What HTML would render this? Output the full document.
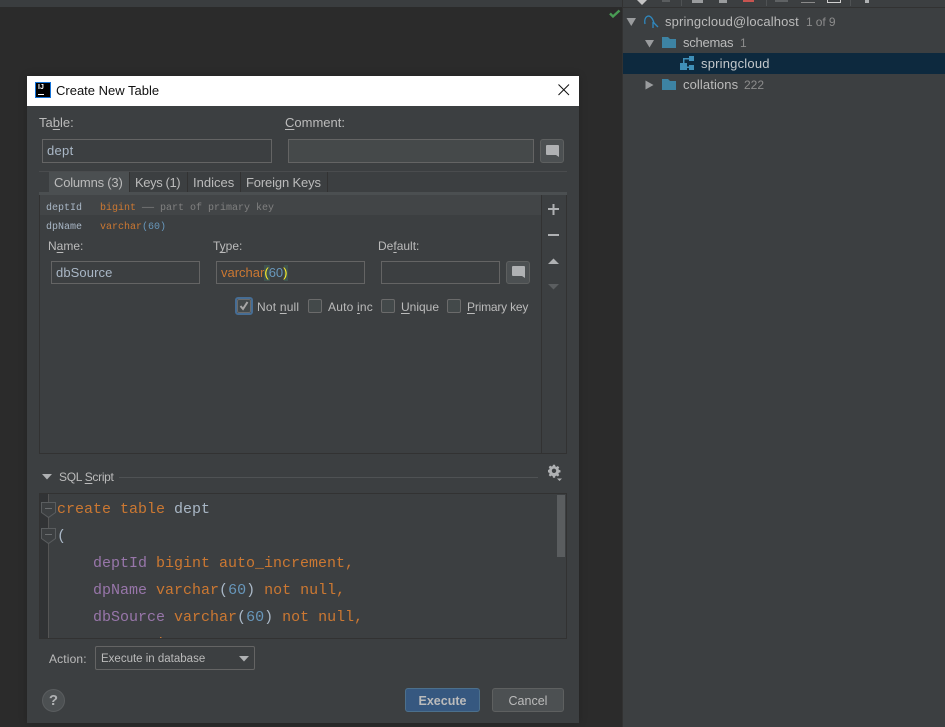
<!DOCTYPE html>
<html><head><meta charset="utf-8"><style>
html,body{margin:0;padding:0;width:945px;height:727px;overflow:hidden;background:#2b2b2b}
*{box-sizing:border-box}
.a,.t,.m{position:absolute;white-space:pre}
.t{font:13px/16px "Liberation Sans",sans-serif;color:#bbbbbb}
.m{font:15px/27px "Liberation Mono",monospace}
.s{font:10px/14px "Liberation Mono",monospace;position:absolute;white-space:pre}
.o{color:#cc7832}.b{color:#6897bb}.p{color:#9876aa}.w{color:#a9b7c6}.g{color:#808080}
.f{position:absolute;border:1px solid #646464;height:24px}
u{text-underline-offset:2px}
.cb{position:absolute;width:14px;height:14px;border:1px solid #6b6b6b;border-radius:2px;background:#43494a}
</style></head><body>
<div class="a" style="left:0;top:0;width:945px;height:7px;background:#3a3d3f"></div>
<div class="a" style="left:0;top:7px;width:623px;height:720px;background:#2b2b2b"></div>
<div class="a" style="left:623px;top:0;width:322px;height:727px;background:#3c3f41"></div>
<div class="a" style="left:623px;top:7px;width:322px;height:1px;background:#323232"></div>
<div class="a" style="left:622px;top:0;width:1px;height:727px;background:#323232"></div>
<svg class="a" style="left:620px;top:0" width="325" height="8"><g fill="#afb1b3"><path d="M17 0h10l-5 5z" fill="#c4c4c4"/><rect x="42" y="0" width="8" height="2" fill="#5a5d5f"/><rect x="61" y="0" width="1" height="6" fill="#4f5254"/><rect x="72" y="0" width="11" height="3" fill="#9a9c9e"/><rect x="99" y="0" width="8" height="3" fill="#9a9c9e"/><rect x="123" y="0" width="11" height="2" fill="#c75450"/><rect x="146" y="0" width="1" height="6" fill="#4f5254"/><rect x="155" y="0" width="13" height="2" fill="#5f6264"/><rect x="181" y="2" width="14" height="1" fill="#8a8a8a"/><path d="M207.500 0v2.500h13V0" fill="none" stroke="#d0d0d0"/><rect x="230" y="0" width="1" height="6" fill="#4f5254"/><rect x="245" y="0" width="4" height="3"/></g></svg>
<svg class="a" style="left:609px;top:9px" width="14" height="10"><path d="M1 4.500L4 7.500L10.500 1.500" fill="none" stroke="#499c54" stroke-width="2.400"/></svg>

<div class="a" style="left:623px;top:53px;width:322px;height:21px;background:#0d293e"></div>
<svg class="a" style="left:620px;top:0" width="80" height="100">
<g fill="#9a9c9e"><path d="M6.500 18h9.500l-4.750 8z"/><path d="M25 40h9l-4.500 7.500z"/><path d="M25.500 80.500l8 4.500l-8 4.500z"/></g>
<g fill="#3d83a3"><path d="M42 37h6l2 2h6v9H42z"/><path d="M42 79h6l2 2h6v9H42z"/></g>
<path d="M25 24C24 19 26 16 29 16C32 17 33 20 34 23L38 27M33 22V28" fill="none" stroke="#2f88bf" stroke-width="1.300"/>
<g fill="#3f8fb8"><rect x="60" y="63" width="7" height="7"/><rect x="69" y="56" width="5" height="5"/><rect x="69" y="65" width="5" height="5"/><path d="M63 63V58h6v1.500h-4.500V63zM67 66.500h2V68h-2z"/></g>
</svg>
<div class="t" style="left:665px;top:14px;letter-spacing:.14px">springcloud@localhost</div>
<div class="t" style="left:806px;top:14px;color:#8c8c8c;font-size:12px;letter-spacing:-.1px">1 of 9</div>
<div class="t" style="left:683px;top:35px;letter-spacing:-.25px">schemas</div>
<div class="t" style="left:740px;top:35px;color:#8c8c8c;font-size:12px">1</div>
<div class="t" style="left:701px;top:56px;letter-spacing:.2px;color:#c4c8cb">springcloud</div>
<div class="t" style="left:683px;top:77px;letter-spacing:.1px">collations</div>
<div class="t" style="left:744px;top:77px;color:#8c8c8c;font-size:12px">222</div>

<div class="a" style="left:27px;top:76px;width:552px;height:647px;background:#3c3f41;box-shadow:0 0 8px rgba(0,0,0,.18)"></div>
<div class="a" style="left:27px;top:76px;width:552px;height:30px;background:#fff"></div>
<svg class="a" style="left:35px;top:82px" width="17" height="17"><rect x=".5" y=".5" width="15" height="15" fill="#000" stroke="#1573d8"/><rect x="3" y="12" width="6" height="1" fill="#fff"/></svg>
<div class="a" style="left:38px;top:84px;font:bold 7px/8px 'Liberation Sans',sans-serif;color:#fff">IJ</div>
<div class="t" style="left:56px;top:83px;color:#111">Create New Table</div>
<svg class="a" style="left:558px;top:84px" width="12" height="12"><path d="M.5.500L11 11M11 .5L.5 11" stroke="#111" stroke-width="1"/></svg>

<div class="t" style="left:39px;top:115px">Ta<u>b</u>le:</div>
<div class="t" style="left:285px;top:115px"><u>C</u>omment:</div>
<div class="f" style="left:42px;top:139px;width:230px"></div>
<div class="t" style="left:47px;top:143px;color:#a9b7c6;letter-spacing:.3px">dept</div>
<div class="f" style="left:288px;top:139px;width:246px;background:#45494a"></div>
<div class="a" style="left:540px;top:139px;width:24px;height:24px;background:#4c5052;border:1px solid #5e6060;border-radius:3px"></div>
<svg class="a" style="left:545px;top:144px" width="15" height="14"><path d="M2 1h11a1 1 0 0 1 1 1v11l-3-2H2a1 1 0 0 1-1-1V2a1 1 0 0 1 1-1z" fill="#afb1b3"/></svg>

<div class="a" style="left:39px;top:171px;width:528px;height:1px;background:#4a4c4e"></div>
<div class="a" style="left:49px;top:172px;width:80px;height:20px;background:#4b4f51"></div>
<div class="a" style="left:129px;top:172px;width:1px;height:20px;background:#323232"></div>
<div class="a" style="left:187px;top:172px;width:1px;height:20px;background:#323232"></div>
<div class="a" style="left:240px;top:172px;width:1px;height:20px;background:#323232"></div>
<div class="a" style="left:327px;top:172px;width:1px;height:20px;background:#323232"></div>
<div class="t" style="left:54px;top:175px;letter-spacing:-.2px">Columns (3)</div>
<div class="t" style="left:135px;top:175px;letter-spacing:-.4px">Keys (1)</div>
<div class="t" style="left:193px;top:175px">Indices</div>
<div class="t" style="left:246px;top:175px;letter-spacing:-.15px">Foreign Keys</div>
<div class="a" style="left:39px;top:192px;width:528px;height:3px;background:#4b4f51"></div>

<div class="a" style="left:39px;top:195px;width:528px;height:259px;border:1px solid #323232;border-top:0"></div>
<div class="a" style="left:40px;top:195px;width:501px;height:20px;background:#424547"></div>
<div class="a" style="left:541px;top:195px;width:1px;height:259px;background:#323232"></div>
<div class="s" style="left:46px;top:202px;color:#a9b7c6">deptId</div>
<div class="s" style="left:100px;top:202px"><span class="o">bigint</span> <span class="g"><span style="display:inline-block;width:12px;transform:scaleX(2);transform-origin:left">—</span> part of primary key</span></div>
<div class="s" style="left:46px;top:221px;color:#a9b7c6">dpName</div>
<div class="s" style="left:100px;top:221px"><span class="o">varchar</span><span class="b">(60)</span></div>

<svg class="a" style="left:547px;top:202px" width="14" height="92" fill="#afb1b3"><path d="M1 6h11v2H1zM5.500 2h2v11h-2z"/><path d="M1 32h11v2H1z"/><path d="M1 62l5.500-5.500l5.500 5.500z"/><path d="M1 82h11l-5.500 5.500z" fill="#5b5e60"/></svg>

<div class="t" style="left:48px;top:238px;font-size:12px">N<u>a</u>me:</div>
<div class="t" style="left:213px;top:238px;font-size:12px">T<u>y</u>pe:</div>
<div class="t" style="left:378px;top:238px;font-size:12px">De<u>f</u>ault:</div>
<div class="f" style="left:51px;top:261px;width:149px;height:23px"></div>
<div class="t" style="left:56px;top:265px;color:#a9b7c6;letter-spacing:.1px">dbSource</div>
<div class="f" style="left:216px;top:261px;width:149px;height:23px"></div>
<div class="a" style="left:264px;top:265px;width:6px;height:16px;background:#3f5350"></div>
<div class="a" style="left:284px;top:265px;width:4px;height:16px;background:#3f5350"></div>
<div class="t" style="left:221px;top:265px"><span class="o">varchar</span><span style="color:#ffef28">(</span><span class="b">60</span><span style="color:#ffef28">)</span></div>
<div class="f" style="left:381px;top:261px;width:119px;height:23px"></div>
<div class="a" style="left:506px;top:261px;width:24px;height:23px;background:#4c5052;border:1px solid #5e6060;border-radius:3px"></div>
<svg class="a" style="left:511px;top:265px" width="15" height="14"><path d="M2 1h11a1 1 0 0 1 1 1v11l-3-2H2a1 1 0 0 1-1-1V2a1 1 0 0 1 1-1z" fill="#afb1b3"/></svg>

<div class="a" style="left:235px;top:297px;width:18px;height:18px;border:2px solid #466d94;border-radius:3px"></div>
<div class="cb" style="left:237px;top:299px"></div>
<svg class="a" style="left:238px;top:300px" width="12" height="12"><path d="M2.500 6L5 9L9.500 2" fill="none" stroke="#a7a7a7" stroke-width="2"/></svg>
<div class="t" style="left:257px;top:299px;font-size:12px;letter-spacing:.2px">Not <u>n</u>ull</div>
<div class="cb" style="left:308px;top:299px"></div>
<div class="t" style="left:328px;top:299px;font-size:12px;letter-spacing:.2px">Auto <u>i</u>nc</div>
<div class="cb" style="left:381px;top:299px"></div>
<div class="t" style="left:401px;top:299px;font-size:12px"><u>U</u>nique</div>
<div class="cb" style="left:447px;top:299px"></div>
<div class="t" style="left:467px;top:299px;font-size:12px;letter-spacing:-.2px"><u>P</u>rimary key</div>

<svg class="a" style="left:42px;top:474px" width="10" height="6"><path d="M0 0h10l-5 5.500z" fill="#afb1b3"/></svg>
<div class="t" style="left:59px;top:469px;font-size:12px;letter-spacing:-.3px">SQL <u>S</u>cript</div>
<div class="a" style="left:119px;top:477px;width:419px;height:1px;background:#4f5254"></div>
<svg class="a" style="left:548px;top:464px" width="16" height="18" fill="#afb1b3"><path d="M6.200 1h2.600l.4 2 1.400.6 1.700-1.100 1.800 1.800-1.100 1.700.6 1.400 2 .4v2.600l-2 .4-.6 1.400 1.100 1.700-1.800 1.800-1.700-1.100-1.400.6-.4 2H6.200l-.4-2-1.400-.6-1.700 1.100-1.800-1.800 1.100-1.700-.6-1.400-2-.4V7.400l2-.4.600-1.400-1.100-1.700 1.800-1.800 1.700 1.100 1.400-.6z" transform="scale(.8)"/><circle cx="6" cy="6.800" r="2.200" fill="#3c3f41"/><path d="M9 14.500h5l-2.500 2.500z"/></svg>

<div class="a" style="left:39px;top:493px;width:528px;height:146px;border:1px solid #323232"></div>
<div class="a" style="left:40px;top:494px;width:8px;height:144px;background:#313335"></div>
<div class="a" style="left:48px;top:494px;width:1px;height:144px;background:#555"></div>
<svg class="a" style="left:41px;top:502px" width="16" height="44"><g fill="#3c3f41" stroke="#5a5d5f"><path d="M.5.500h14v10l-7 5l-7-5z"/><path d="M.5 26.500h14v10l-7 5l-7-5z"/></g><path d="M4 6.500h7M4 32.500h7" stroke="#6a6d6f"/></svg>
<div class="a" style="left:57px;top:494px;width:500px;height:144px;overflow:hidden">
<div class="m" style="left:0;top:2px"><span class="o">create table </span><span class="w">dept</span></div>
<div class="m" style="left:0;top:29px;color:#a9b7c6">(</div>
<div class="m" style="left:36px;top:56px"><span class="p">deptId</span> <span class="o">bigint auto_increment,</span></div>
<div class="m" style="left:36px;top:83px"><span class="p">dpName</span> <span class="o">varchar</span><span class="w">(</span><span class="b">60</span><span class="w">)</span> <span class="o">not null,</span></div>
<div class="m" style="left:36px;top:110px"><span class="p">dbSource</span> <span class="o">varchar</span><span class="w">(</span><span class="b">60</span><span class="w">)</span> <span class="o">not null,</span></div>
<div class="m" style="left:36px;top:137px"><span class="o">constraint</span></div>
</div>
<div class="a" style="left:557px;top:495px;width:8px;height:62px;background:#5a5d5f"></div>

<div class="t" style="left:49px;top:651px;font-size:12px;letter-spacing:.15px">Action:</div>
<div class="a" style="left:95px;top:646px;width:160px;height:24px;border:1px solid #646464;border-radius:2px"></div>
<div class="t" style="left:101px;top:651px;font-size:11.500px">Execute in database</div>
<svg class="a" style="left:239px;top:656px" width="10" height="6"><path d="M0 0h10l-5 5.500z" fill="#afb1b3"/></svg>

<div class="a" style="left:42px;top:689px;width:23px;height:23px;border-radius:50%;background:#4c5052;border:1px solid #5a5d5f"></div>
<div class="a" style="left:42px;top:692px;width:23px;text-align:center;font:bold 15px/17px 'Liberation Sans',sans-serif;color:#afb1b3">?</div>

<div class="a" style="left:405px;top:688px;width:75px;height:24px;background:#365880;border:1px solid #4c708c;border-radius:3px;text-align:center;font:bold 12.500px/24px 'Liberation Sans',sans-serif;color:#bbbbbb">Execute</div>
<div class="a" style="left:492px;top:688px;width:72px;height:24px;background:#4c5052;border:1px solid #5e6060;border-radius:3px;text-align:center;font:12.500px/24px 'Liberation Sans',sans-serif;color:#bbbbbb">Cancel</div>
</body></html>
